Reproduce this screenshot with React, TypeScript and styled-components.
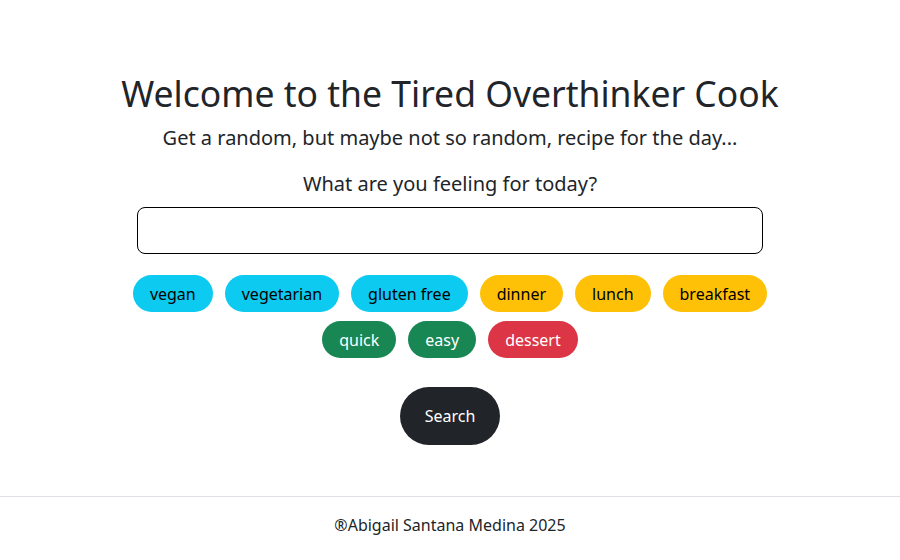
import React, { useState } from "react";
import styled, { createGlobalStyle } from "styled-components";

const GlobalStyle = createGlobalStyle`
  body {
    margin: 0;
    background: #fff;
    color: #212529;
    font-family: "Noto Sans", "Liberation Sans", sans-serif;
    font-size: 16px;
    line-height: 1.5;
  }
`;

const Page = styled.div`
  display: flex;
  flex-direction: column;
  min-height: 560px;
`;

const Main = styled.main`
  display: flex;
  flex-direction: column;
  align-items: center;
  padding-top: 72px;
`;

const Title = styled.h1`
  margin: 0;
  font-size: 35.5px;
  font-weight: 400;
  line-height: 43px;
`;

const Subtitle = styled.p`
  margin: 8px 0 0;
  font-size: 20px;
  line-height: 30px;
`;

const Question = styled.label`
  margin-top: 16px;
  font-size: 20px;
  line-height: 30px;
`;

const SearchInput = styled.input`
  box-sizing: border-box;
  margin-top: 8px;
  width: 626px;
  height: 47px;
  padding: 6px 12px;
  border: 1px solid #000;
  border-radius: 8px;
  font: inherit;
  outline: none;
`;

const TagList = styled.div`
  display: flex;
  flex-wrap: wrap;
  justify-content: center;
  gap: 9px 12px;
  max-width: 660px;
  margin-top: 21px;
`;

type Tone = "info" | "warning" | "success" | "danger";

const tones: Record<Tone, { bg: string; fg: string }> = {
  info: { bg: "#0dcaf0", fg: "#000" },
  warning: { bg: "#ffc107", fg: "#000" },
  success: { bg: "#198754", fg: "#fff" },
  danger: { bg: "#dc3545", fg: "#fff" },
};

const Tag = styled.button<{ $tone: Tone }>`
  height: 37px;
  padding: 0 17px;
  border: 0;
  border-radius: 999px;
  background: ${(p) => tones[p.$tone].bg};
  color: ${(p) => tones[p.$tone].fg};
  font: inherit;
  font-size: 16px;
  cursor: pointer;
`;

const SearchButton = styled.button`
  margin-top: 29px;
  width: 100px;
  height: 58px;
  border: 0;
  border-radius: 999px;
  background: #212529;
  color: #fff;
  font: inherit;
  font-size: 16px;
  cursor: pointer;
`;

const Footer = styled.footer`
  margin-top: 51px;
  border-top: 1px solid #dee2e6;
  padding-top: 16px;
  text-align: center;
  font-size: 16px;
  line-height: 24px;
`;

const tags: { label: string; tone: Tone }[] = [
  { label: "vegan", tone: "info" },
  { label: "vegetarian", tone: "info" },
  { label: "gluten free", tone: "info" },
  { label: "dinner", tone: "warning" },
  { label: "lunch", tone: "warning" },
  { label: "breakfast", tone: "warning" },
  { label: "quick", tone: "success" },
  { label: "easy", tone: "success" },
  { label: "dessert", tone: "danger" },
];

export default function App() {
  const [query, setQuery] = useState("");

  return (
    <Page>
      <GlobalStyle />
      <Main>
        <Title>Welcome to the Tired Overthinker Cook</Title>
        <Subtitle>
          Get a random, but maybe not so random, recipe for the day...
        </Subtitle>
        <Question htmlFor="query">What are you feeling for today?</Question>
        <SearchInput
          id="query"
          value={query}
          onChange={(e) => setQuery(e.currentTarget.value)}
        />
        <TagList>
          {tags.map((t) => (
            <Tag
              key={t.label}
              $tone={t.tone}
              onClick={() => setQuery((q) => (q ? q + " " + t.label : t.label))}
            >
              {t.label}
            </Tag>
          ))}
        </TagList>
        <SearchButton>Search</SearchButton>
      </Main>
      <Footer>®Abigail Santana Medina 2025</Footer>
    </Page>
  );
}
